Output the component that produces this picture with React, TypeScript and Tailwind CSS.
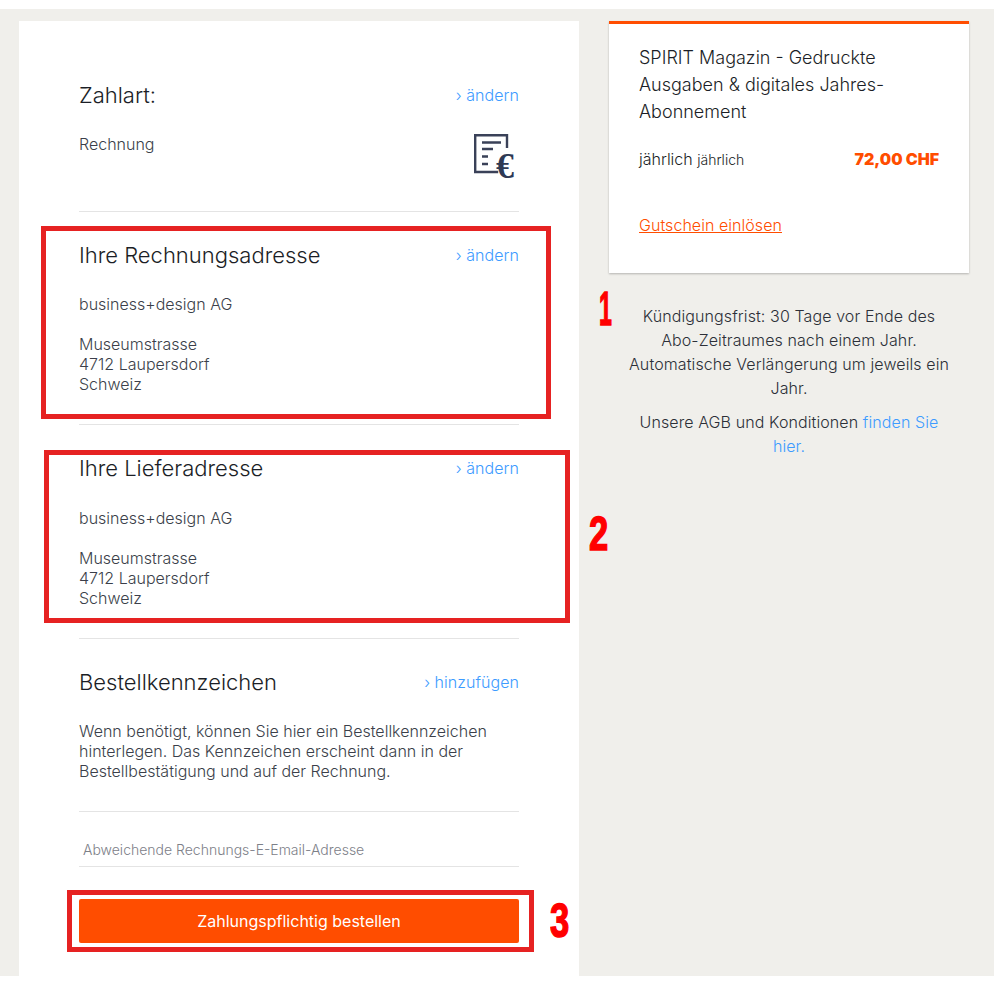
const font = "font-['Inter','Noto_Sans',sans-serif]";

function InvoiceIcon() {
  return (
    <div className="relative h-[48px] w-[45px]">
      <svg width="45" height="48" viewBox="0 0 45 48" fill="none" stroke="#3a4158" strokeWidth="2.4">
        <path d="M33 14V1.2H1.2V38h23" />
        <path d="M8 8.5h19M8 15h11M8 22.5h6M8 30h6" />
      </svg>
      <span className="absolute top-[13px] left-[22px] font-['Liberation_Serif',serif] text-[36px] leading-[38px] font-bold text-[#2f3a55]">€</span>
    </div>
  );
}

function SectionHead({ title, action }: { title: string; action: string }) {
  return (
    <div className="flex items-center justify-between">
      <h2 className="text-[22px] leading-[28px] font-light text-[#1b1e26]">{title}</h2>
      <a className="text-[16px] font-light tracking-[0.05px] text-[#3d9bff]">› {action}</a>
    </div>
  );
}

function Address({ title }: { title: string }) {
  return (
    <>
      <SectionHead title={title} action="ändern" />
      <div className="mt-[25.4px] text-[16px] leading-[20px] font-light text-[#3b3f4a]">
        <p>business+design AG</p>
        <p className="mt-[20px]">Museumstrasse</p>
        <p>4712 Laupersdorf</p>
        <p>Schweiz</p>
      </div>
    </>
  );
}

export default function App() {
  return (
    <div className={`min-h-[985px] bg-white pt-[9px] ${font}`}>
      <div className="relative flex h-[967px] gap-[30px] bg-[#f0efeb] pt-[12px] pl-[19px]">
        <main className="h-[955px] w-[560px] bg-white px-[60px] pt-[60px]">
          <SectionHead title="Zahlart:" action="ändern" />
          <div className="mt-[25px] flex h-[62px] justify-between">
            <p className="text-[16px] leading-[20px] font-light text-[#3b3f4a]">Rechnung</p>
            <InvoiceIcon />
          </div>
          <div className="mt-[15px] border-t border-[#e4e4e4] pt-[29px]">
            <Address title="Ihre Rechnungsadresse" />
          </div>
          <div className="mt-[30px] border-t border-[#e4e4e4] pt-[29px]">
            <Address title="Ihre Lieferadresse" />
          </div>
          <div className="mt-[30px] border-t border-[#e4e4e4] pt-[29px]">
            <SectionHead title="Bestellkennzeichen" action="hinzufügen" />
            <p className="mt-[25.4px] text-[16px] leading-[20px] font-light text-[#3b3f4a]">
              Wenn benötigt, können Sie hier ein Bestellkennzeichen hinterlegen. Das Kennzeichen erscheint dann in der Bestellbestätigung und auf der Rechnung.
            </p>
          </div>
          <div className="mt-[30px] border-t border-[#e4e4e4]">
            <div className="flex h-[55px] items-end border-b border-[#e4e4e4] pb-[6px] pl-[4px] text-[14px] leading-[20px] font-light text-[#7d8088]">
              Abweichende Rechnungs-E-Email-Adresse
            </div>
          </div>
          <button className="mt-[32px] h-[44px] w-full rounded-[2px] bg-[#ff4d00] text-[16px] font-normal text-white">
            Zahlungspflichtig bestellen
          </button>
        </main>

        <aside className="w-[360px]">
          <div className="h-[252px] border-t-[3px] border-[#ff4d00] bg-white px-[30px] pt-[20px] shadow-[0_1px_2px_rgba(0,0,0,0.25)]">
            <h3 className="text-[18px] leading-[27px] font-light text-[#1b1e26]">
              SPIRIT Magazin - Gedruckte Ausgaben &amp; digitales Jahres-Abonnement
            </h3>
            <div className="mt-[22px] flex items-center justify-between">
              <p className="text-[16px] font-light text-[#1b1e26]">
                jährlich <span className="text-[14px]">jährlich</span>
              </p>
              <p className="text-[16px] font-black text-[#ff4d00]">72,00 CHF</p>
            </div>
            <a className="mt-[42px] block text-[16px] font-light tracking-[0.05px] text-[#ff4d00] underline">Gutschein einlösen</a>
          </div>
          <div className="mt-[31px] px-[16px] text-center text-[16px] leading-[24px] font-light tracking-[0.1px] text-[#2c2f38]">
            <p>Kündigungsfrist: 30 Tage vor Ende des Abo-Zeitraumes nach einem Jahr. Automatische Verlängerung um jeweils ein Jahr.</p>
            <p className="mt-[10px]">
              Unsere AGB und Konditionen <a className="text-[#3d9bff]">finden Sie hier.</a>
            </p>
          </div>
        </aside>

        {/* annotation marks drawn over the screenshot */}
        <div className="absolute top-[217px] left-[41px] h-[193px] w-[510px] border-[5px] border-[#e62222]" />
        <div className="absolute top-[441px] left-[44px] h-[173px] w-[526px] border-[5px] border-[#e62222]" />
        <div className="absolute top-[881px] left-[67px] h-[62px] w-[467px] border-[5px] border-[#e62222]" />
        <span className="absolute top-[275px] left-[599px] origin-left scale-x-[0.48] font-['Liberation_Sans',sans-serif] text-[48px] leading-[50px] font-bold text-[#ff0000] [-webkit-text-stroke:1.5px_#ff0000]">1</span>
        <span className="absolute top-[500px] left-[589px] origin-left scale-x-[0.72] font-['Liberation_Sans',sans-serif] text-[48px] leading-[50px] font-bold text-[#ff0000] [-webkit-text-stroke:1.5px_#ff0000]">2</span>
        <span className="absolute top-[887px] left-[550px] origin-left scale-x-[0.72] font-['Liberation_Sans',sans-serif] text-[48px] leading-[50px] font-bold text-[#ff0000] [-webkit-text-stroke:1.5px_#ff0000]">3</span>
      </div>
    </div>
  );
}
